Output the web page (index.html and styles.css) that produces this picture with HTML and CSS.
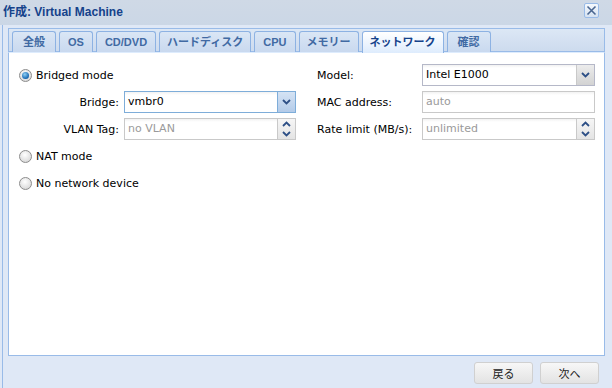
FILE: index.html
```html
<!DOCTYPE html>
<html lang="ja">

<head>
    <meta charset="UTF-8">
    <title>作成: Virtual Machine</title>
    <link rel="stylesheet" href="styles.css">
</head>

<body>
    <div class="window">
        <div class="win-header">
            <span class="win-title">作成: Virtual Machine</span>
            <span class="win-close">
                <svg width="11" height="11" viewBox="0 0 11 11">
                    <path d="M1.5 1.5l8 8M9.5 1.5l-8 8" stroke="#4a6690" stroke-width="1.6" fill="none" />
                </svg>
            </span>
        </div>

        <div class="win-body">
            <div class="tabpanel">
                <div class="tabbar">
                    <div class="tab kanji">全般</div>
                    <div class="tab">OS</div>
                    <div class="tab">CD/DVD</div>
                    <div class="tab kana">ハードディスク</div>
                    <div class="tab">CPU</div>
                    <div class="tab kana">メモリー</div>
                    <div class="tab kana active">ネットワーク</div>
                    <div class="tab kanji">確認</div>
                </div>

                <div class="tab-body">
                    <div class="form">
                        <!-- left column -->
                        <div class="col">
                            <div class="radio-row">
                                <span class="radio checked"></span>
                                <span>Bridged mode</span>
                            </div>
                            <div class="field-row">
                                <span class="label right">Bridge:</span>
                                <div class="field focus">
                                    <span class="value">vmbr0</span>
                                    <span class="trigger">
                                        <svg width="9" height="6" viewBox="0 0 9 6"><path d="M1 1l3.5 3.5L8 1" /></svg>
                                    </span>
                                </div>
                            </div>
                            <div class="field-row">
                                <span class="label right">VLAN Tag:</span>
                                <div class="field light">
                                    <span class="value empty">no VLAN</span>
                                    <span class="spinner">
                                        <span class="spin-half"><svg width="9" height="6" viewBox="0 0 9 6"><path d="M1 5l3.5-3.5L8 5" /></svg></span>
                                        <span class="spin-half"><svg width="9" height="6" viewBox="0 0 9 6"><path d="M1 1l3.5 3.5L8 1" /></svg></span>
                                    </span>
                                </div>
                            </div>
                            <div class="radio-row">
                                <span class="radio"></span>
                                <span>NAT mode</span>
                            </div>
                            <div class="radio-row">
                                <span class="radio"></span>
                                <span>No network device</span>
                            </div>
                        </div>

                        <!-- right column -->
                        <div class="col">
                            <div class="field-row">
                                <span class="label">Model:</span>
                                <div class="field">
                                    <span class="value">Intel E1000</span>
                                    <span class="trigger">
                                        <svg width="9" height="6" viewBox="0 0 9 6"><path d="M1 1l3.5 3.5L8 1" /></svg>
                                    </span>
                                </div>
                            </div>
                            <div class="field-row">
                                <span class="label">MAC address:</span>
                                <div class="field light">
                                    <span class="value empty">auto</span>
                                </div>
                            </div>
                            <div class="field-row">
                                <span class="label">Rate limit (MB/s):</span>
                                <div class="field light">
                                    <span class="value empty">unlimited</span>
                                    <span class="spinner">
                                        <span class="spin-half"><svg width="9" height="6" viewBox="0 0 9 6"><path d="M1 5l3.5-3.5L8 5" /></svg></span>
                                        <span class="spin-half"><svg width="9" height="6" viewBox="0 0 9 6"><path d="M1 1l3.5 3.5L8 1" /></svg></span>
                                    </span>
                                </div>
                            </div>
                        </div>
                    </div>
                </div>
            </div>

            <div class="win-footer">
                <button class="btn">戻る</button>
                <button class="btn">次へ</button>
            </div>
        </div>
    </div>
</body>

</html>
```

FILE: styles.css
```css
body {
    margin: 0;
    background-color: #dfe8f6;
    font-family: "DejaVu Sans", "Noto Sans CJK JP", sans-serif;
    font-size: 11px;
    color: #000;
}

.window {
    width: 612px;
    height: 388px;
    overflow: hidden;
}

.win-header {
    position: relative;
    height: 25px;
    background: linear-gradient(#cfd9e6, #cbd7e6);
    box-sizing: border-box;
    padding: 2px 0 0 3px;
}

.win-title {
    font-weight: bold;
    font-size: 12px;
    color: #15428b;
    font-family: "Liberation Sans", "Noto Sans CJK JP", sans-serif;
}

.win-close {
    position: absolute;
    top: 3px;
    right: 13px;
    width: 15px;
    height: 15px;
    box-sizing: border-box;
    border: 1px solid #99bbe8;
    border-radius: 2px;
    background: linear-gradient(#f4f8fd, #d6e2f1);
    display: flex;
    align-items: center;
    justify-content: center;
}

.win-body {
    margin-left: 2px;
    border-left: 1px solid #99bbe8;
    padding: 3px 0 0 5px;
    height: 363px;
    box-sizing: border-box;
}

.tabpanel {
    width: 597px;
}

.tabbar {
    display: flex;
    gap: 3px;
    height: 24px;
    box-sizing: border-box;
    padding: 2px 0 0 3px;
    border: 1px solid #99bbe8;
    background: linear-gradient(#dce7f5, #cddbee);
}

.tab {
    height: 21px;
    box-sizing: border-box;
    padding: 0 8px;
    border: 1px solid #8db2e3;
    border-bottom: none;
    border-radius: 3px 3px 0 0;
    background: linear-gradient(#dae6f5, #c9d9ef);
    color: #416aa3;
    font-family: "Liberation Sans", "Noto Sans CJK JP", sans-serif;
    font-weight: bold;
    font-size: 11px;
    line-height: 20px;
}

.tab.kanji {
    padding: 0 10px;
}

.tab.kana {
    padding: 0 7px;
}

.tab.active {
    height: 22px;
    background: linear-gradient(#ffffff, #deecfd);
    color: #15428b;
    position: relative;
    z-index: 1;
}

.tab-body {
    height: 304px;
    box-sizing: border-box;
    border: 1px solid #99bbe8;
    border-top: 1px solid #deecfd;
    background-color: #fff;
    padding: 11px 0 0 10px;
}

.form {
    display: grid;
    grid-template-columns: 277px 278px;
    column-gap: 21px;
    align-items: start;
}

.col {
    display: flex;
    flex-direction: column;
    gap: 5px;
}

.radio-row {
    height: 22px;
    display: flex;
    align-items: center;
    gap: 4px;
    font-size: 11px;
}

.radio {
    width: 13px;
    height: 13px;
    box-sizing: border-box;
    border-radius: 50%;
    border: 1px solid #8c8c8c;
    background: radial-gradient(circle at 45% 35%, #ffffff, #cfcfcf);
    position: relative;
}

.radio.checked::after {
    content: "";
    position: absolute;
    left: 2px;
    top: 2px;
    width: 7px;
    height: 7px;
    border-radius: 50%;
    background: radial-gradient(circle at 40% 35%, #8fd0f5, #1566b0 70%, #0d3f70);
}

.field-row {
    height: 22px;
    display: flex;
    align-items: center;
}

.label {
    width: 105px;
    flex: none;
    font-size: 11px;
}

.label.right {
    width: 100px;
    padding-right: 5px;
    text-align: right;
}

.field {
    flex: 1;
    height: 22px;
    box-sizing: border-box;
    border: 1px solid #b5b8c8;
    background: linear-gradient(#f2f2f2, #ffffff 3px);
    display: flex;
}

.field.light {
    border-color: #c9c9c9;
}

.field.focus {
    border-color: #7eadd9;
}

.value {
    flex: 1;
    padding-left: 3px;
    line-height: 20px;
    font-size: 11px;
}

.value.empty {
    color: #9a9a9a;
}

.trigger {
    width: 17px;
    border-left: 1px solid #c9c9c9;
    background: linear-gradient(#ececec, #d3d3d3);
    display: flex;
    align-items: center;
    justify-content: center;
}

.field.focus .trigger {
    border-left-color: #7eadd9;
    background: linear-gradient(#d5e3f4, #b3cbe9);
}

.spinner {
    width: 17px;
    border-left: 1px solid #c9c9c9;
    display: flex;
    flex-direction: column;
    background: linear-gradient(#f6f6f6, #e4e4e4);
}

.spin-half {
    flex: 1;
    display: flex;
    align-items: center;
    justify-content: center;
}

.trigger path,
.spin-half path {
    stroke: #2d4f86;
    stroke-width: 1.8;
    fill: none;
}

.win-footer {
    width: 597px;
    display: flex;
    justify-content: flex-end;
    gap: 7px;
    padding-top: 6px;
    box-sizing: border-box;
    padding-right: 6px;
}

.btn {
    width: 59px;
    height: 22px;
    border: 1px solid #d0d0d0;
    border-radius: 3px;
    background: linear-gradient(#f7f7f7, #e3e3e3);
    font-family: "Noto Sans CJK JP", sans-serif;
    font-size: 11px;
    color: #222;
    padding: 0;
}
```
